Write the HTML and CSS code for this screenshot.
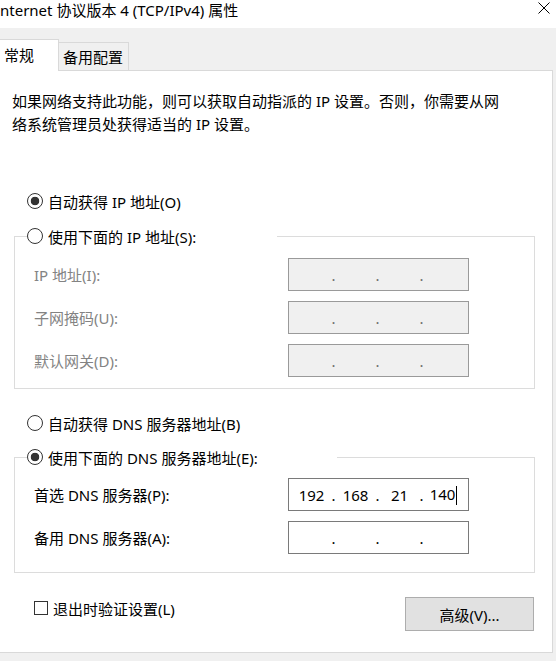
FILE: index.html
```html
<!DOCTYPE html>
<html lang="zh-CN">
<head>
<meta charset="utf-8">
<title>Internet 协议版本 4 (TCP/IPv4) 属性</title>
<link rel="stylesheet" href="styles.css">
</head>
<body>
<div class="window">
  <div class="titlebar">
    <span class="title">nternet 协议版本 4 (TCP/IPv4) 属性</span>
    <svg class="close" width="12" height="12" viewBox="0 0 12 12"><path d="M0.5 0.5 L11.5 11.5 M11.5 0.5 L0.5 11.5" stroke="#000" stroke-width="1" fill="none"/></svg>
  </div>
  <div class="tabs">
    <div class="tab active">常规</div>
    <div class="tab">备用配置</div>
  </div>
  <div class="panel">
    <p class="intro">如果网络支持此功能，则可以获取自动指派的 IP 设置。否则，你需要从网<br>络系统管理员处获得适当的 IP 设置。</p>

    <div class="radio-row top-radio"><span class="radio checked"></span><span>自动获得 IP 地址(O)</span></div>

    <fieldset class="group ip-group">
      <legend class="legend legend-ip"><span class="radio"></span><span>使用下面的 IP 地址(S):</span></legend>
      <div class="rows">
        <div class="field-row disabled">
          <span class="label">IP 地址(I):</span>
          <div class="ipbox"><span class="seg"></span><span class="dot">.</span><span class="seg"></span><span class="dot">.</span><span class="seg"></span><span class="dot">.</span><span class="seg"></span></div>
        </div>
        <div class="field-row disabled">
          <span class="label">子网掩码(U):</span>
          <div class="ipbox"><span class="seg"></span><span class="dot">.</span><span class="seg"></span><span class="dot">.</span><span class="seg"></span><span class="dot">.</span><span class="seg"></span></div>
        </div>
        <div class="field-row disabled">
          <span class="label">默认网关(D):</span>
          <div class="ipbox"><span class="seg"></span><span class="dot">.</span><span class="seg"></span><span class="dot">.</span><span class="seg"></span><span class="dot">.</span><span class="seg"></span></div>
        </div>
      </div>
    </fieldset>

    <div class="radio-row dns-radio"><span class="radio"></span><span>自动获得 DNS 服务器地址(B)</span></div>

    <fieldset class="group dns-group">
      <legend class="legend legend-dns"><span class="radio checked"></span><span>使用下面的 DNS 服务器地址(E):</span></legend>
      <div class="rows">
        <div class="field-row">
          <span class="label">首选 DNS 服务器(P):</span>
          <div class="ipbox"><span class="seg">192</span><span class="dot">.</span><span class="seg">168</span><span class="dot">.</span><span class="seg">21</span><span class="dot">.</span><span class="seg">140<span class="caret"></span></span></div>
        </div>
        <div class="field-row">
          <span class="label">备用 DNS 服务器(A):</span>
          <div class="ipbox"><span class="seg"></span><span class="dot">.</span><span class="seg"></span><span class="dot">.</span><span class="seg"></span><span class="dot">.</span><span class="seg"></span></div>
        </div>
      </div>
    </fieldset>

    <div class="footer">
      <div class="check-row"><span class="checkbox"></span><span>退出时验证设置(L)</span></div>
      <div class="button">高级(V)...</div>
    </div>
  </div>
</div>
</body>
</html>
```

FILE: styles.css
```css
* { box-sizing: border-box; }

html, body {
  margin: 0;
  padding: 0;
}

body {
  width: 556px;
  height: 661px;
  overflow: hidden;
  background: #f0f0f0;
  font-family: "Noto Sans", "Noto Sans CJK SC", sans-serif;
  font-size: 15px;
  color: #000;
}

.window {
  width: 556px;
}

.titlebar {
  height: 28px;
  background: #fff;
  display: flex;
  justify-content: space-between;
  align-items: flex-start;
}

.title {
  line-height: 20px;
  white-space: nowrap;
}

.close {
  margin-top: 2px;
  margin-right: 6px;
  display: block;
}

.tabs {
  height: 42px;
  display: flex;
  align-items: flex-end;
}

.tab {
  height: 28px;
  width: 70px;
  padding-left: 4px;
  line-height: 28px;
  border-top: 1px solid #d9d9d9;
  border-right: 1px solid #d9d9d9;
  background: #f0f0f0;
  white-space: nowrap;
}

.tab.active {
  position: relative;
  z-index: 1;
  width: 59px;
  height: 32px;
  margin-bottom: -1px;
  line-height: 30px;
  background: #fff;
}

.panel {
  width: 553px;
  background: #fff;
  border: 1px solid #d9d9d9;
  border-left: none;
  padding: 19px 0 21px 0;
}

.intro {
  margin: 0;
  padding-left: 12px;
  line-height: 23px;
  white-space: nowrap;
}

.radio-row {
  height: 24px;
  display: flex;
  align-items: center;
  gap: 5px;
  margin-left: 27px;
  white-space: nowrap;
}

.top-radio { margin-top: 53px; }
.dns-radio { margin-top: 22px; }

.radio {
  width: 16px;
  height: 16px;
  flex: none;
  border: 1px solid #333;
  border-radius: 50%;
  background: #fff;
}

.radio.checked {
  background: radial-gradient(circle, #333 0 4px, #fff 4.6px);
}

.group {
  margin: 11px 0 0 14px;
  width: 521px;
  border: 1px solid #dcdcdc;
  padding: 10px 0 11px 0;
  min-inline-size: 0;
}

.dns-group {
  margin-top: 10px;
  padding: 9px 0 18px 0;
}

.legend {
  display: flex;
  align-items: center;
  gap: 5px;
  height: 24px;
  padding: 0;
  margin-left: 12px;
  white-space: nowrap;
}

.legend-ip { width: 250px; }
.legend-dns { width: 310px; }

.rows {
  display: flex;
  flex-direction: column;
  gap: 10px;
}

.field-row {
  display: grid;
  grid-template-columns: 254px 181px;
  align-items: center;
  padding-left: 19px;
  height: 33px;
}

.label {
  white-space: nowrap;
}

.ipbox {
  height: 33px;
  border: 1px solid #7a7a7a;
  background: #fff;
  display: flex;
  align-items: center;
  padding-left: 5px;
  line-height: 20px;
}

.field-row.disabled .label { color: #838383; }
.field-row.disabled .ipbox {
  background: #f0f0f0;
  border-color: #9a9a9a;
  color: #6d6d6d;
}

.seg {
  width: 35px;
  text-align: center;
  white-space: nowrap;
}

.dot {
  width: 9px;
  text-align: center;
}

.caret {
  display: inline-block;
  width: 1px;
  height: 19px;
  background: #000;
  vertical-align: middle;
  margin-left: 1px;
}

.footer {
  margin-top: 23px;
  height: 35px;
  display: flex;
  justify-content: space-between;
  align-items: flex-start;
  padding: 0 18px 0 34px;
}

.check-row {
  height: 24px;
  display: flex;
  align-items: center;
  gap: 5px;
  white-space: nowrap;
}

.checkbox {
  width: 14px;
  height: 14px;
  border: 1px solid #333;
  background: #fff;
}

.button {
  margin-top: 1px;
  width: 129px;
  height: 34px;
  background: #e1e1e1;
  border: 1px solid #adadad;
  display: flex;
  align-items: center;
  justify-content: center;
  white-space: nowrap;
}
```
